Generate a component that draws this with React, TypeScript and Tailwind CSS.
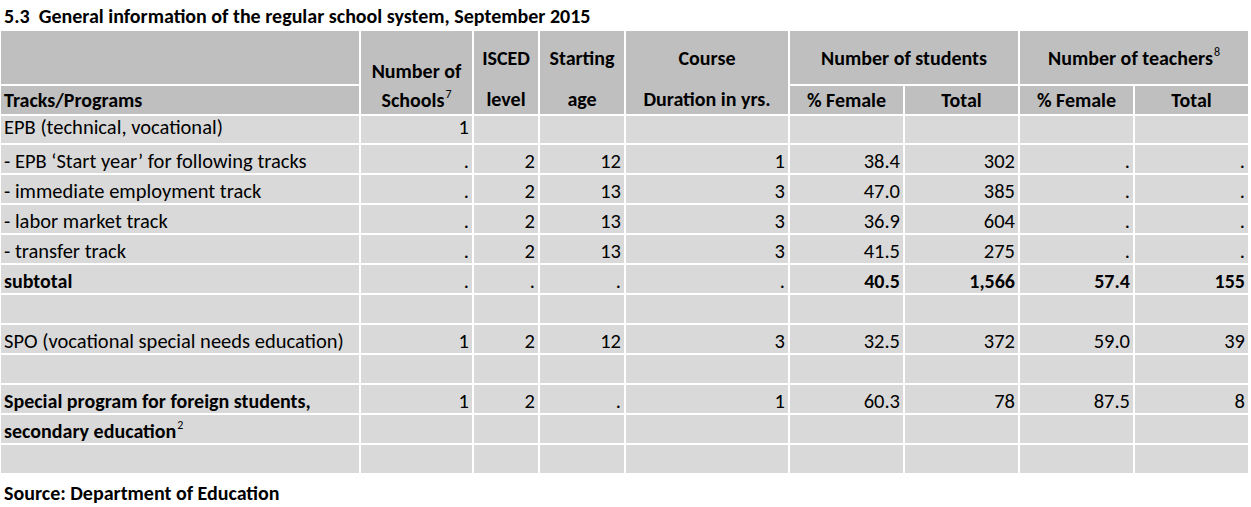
type Row = {
  label: string
  sup?: string
  bold?: boolean
  first?: boolean
  cells: string[]
}

const rows: Row[] = [
  { label: 'EPB (technical, vocational)', first: true, cells: ['1', '', '', '', '', '', '', ''] },
  { label: '- EPB ‘Start year’ for following tracks', cells: ['.', '2', '12', '1', '38.4', '302', '.', '.'] },
  { label: '- immediate employment track', cells: ['.', '2', '13', '3', '47.0', '385', '.', '.'] },
  { label: '- labor market track', cells: ['.', '2', '13', '3', '36.9', '604', '.', '.'] },
  { label: '- transfer track', cells: ['.', '2', '13', '3', '41.5', '275', '.', '.'] },
  { label: 'subtotal', bold: true, cells: ['.', '.', '.', '.', '40.5', '1,566', '57.4', '155'] },
  { label: '', cells: ['', '', '', '', '', '', '', ''] },
  { label: 'SPO (vocational special needs education)', cells: ['1', '2', '12', '3', '32.5', '372', '59.0', '39'] },
  { label: '', cells: ['', '', '', '', '', '', '', ''] },
  { label: 'Special program for foreign students,', bold: true, cells: ['1', '2', '.', '1', '60.3', '78', '87.5', '8'] },
  { label: 'secondary education', sup: '2', bold: true, cells: ['', '', '', '', '', '', '', ''] },
  { label: '', cells: ['', '', '', '', '', '', '', ''] },
]

const font = { fontFamily: 'Carlito, Calibri, Lato, "Liberation Sans", sans-serif' }

function Sup({ n }: { n: string }) {
  return <sup className="text-[12px] ml-[1px] font-normal">{n}</sup>
}

function TwoLine({ top, bottom }: { top: string; bottom: React.ReactNode }) {
  return (
    <div className="row-span-2 bg-[#bfbfbf] flex flex-col font-bold text-[20px]">
      <div className="h-[53px] flex items-center justify-center">{top}</div>
      <div className="flex-1 flex items-center justify-center">{bottom}</div>
    </div>
  )
}

export default function App() {
  return (
    <div className="w-[1251px] h-[507px] bg-white text-black text-[20.5px]" style={font}>
      {/* title */}
      <div className="h-[31px] pl-[4px] pt-[5px] text-[20px] font-bold whitespace-pre leading-[22px]">
        5.3  General information of the regular school system, September 2015
      </div>

      <div className="ml-[1px] grid grid-cols-[358px_111px_64px_84px_162px_113px_113px_113px_113px] gap-[2px] leading-[22px]">
        {/* header */}
        <div className="h-[53px] bg-[#bfbfbf]" />
        <div className="row-span-2 bg-[#bfbfbf] flex flex-col justify-end items-center font-bold text-[20px]">
          <div className="leading-[30px]">Number of</div>
          <div className="h-[28px] flex items-center">Schools<Sup n="7" /></div>
        </div>
        <TwoLine top="ISCED" bottom="level" />
        <TwoLine top="Starting" bottom="age" />
        <TwoLine top="Course" bottom="Duration in yrs." />
        <div className="col-span-2 bg-[#bfbfbf] flex items-center justify-center font-bold text-[20px]">Number of students</div>
        <div className="col-span-2 bg-[#bfbfbf] flex items-center justify-center font-bold text-[20px]">
          Number of teachers<Sup n="8" />
        </div>
        <div className="h-[28px] bg-[#bfbfbf] flex items-center pl-[3px] font-bold text-[20px]">Tracks/Programs</div>
        <div className="bg-[#bfbfbf] flex items-center justify-center font-bold text-[20px]">% Female</div>
        <div className="bg-[#bfbfbf] flex items-center justify-center font-bold text-[20px]">Total</div>
        <div className="bg-[#bfbfbf] flex items-center justify-center font-bold text-[20px]">% Female</div>
        <div className="bg-[#bfbfbf] flex items-center justify-center font-bold text-[20px]">Total</div>

        {/* body */}
        {rows.map((r, i) => {
          const align = r.first ? 'h-[27px] items-start' : 'h-[28px] items-center pt-[4px]'
          return (
            <div key={i} className="contents">
              <div
                className={`${align} bg-[#d9d9d9] flex pl-[3px] whitespace-nowrap ${r.bold ? 'font-bold text-[20px]' : ''}`}
              >
                {r.label}
                {r.sup && <Sup n={r.sup} />}
              </div>
              {r.cells.map((c, j) => (
                <div
                  key={j}
                  className={`${align} bg-[#d9d9d9] flex justify-end pr-[3px] ${r.label === 'subtotal' && j >= 4 ? 'font-bold text-[20px]' : ''}`}
                >
                  {c}
                </div>
              ))}
            </div>
          )
        })}
      </div>

      <div className="pl-[4px] pt-[9px] text-[20px] font-bold leading-[22px]">Source: Department of Education</div>
    </div>
  )
}
